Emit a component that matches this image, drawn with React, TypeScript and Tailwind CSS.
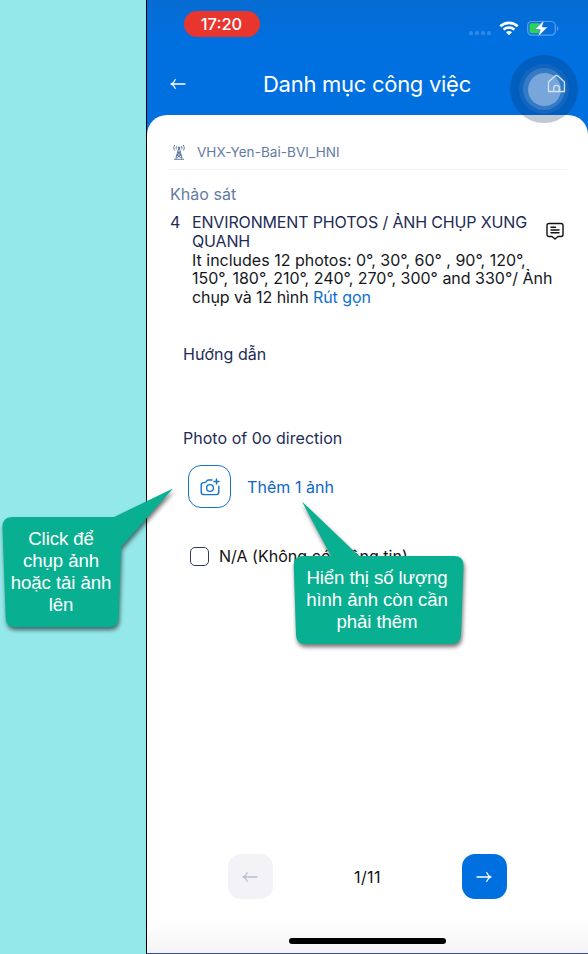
import React from "react";

function ArrowLeft({ className }: { className?: string }) {
  return (
    <svg className={className} width="16" height="12" viewBox="0 0 16 12" fill="none" stroke="currentColor" strokeWidth="1.3" strokeLinecap="round" strokeLinejoin="round">
      <path d="M15 6H1M5.200 1.600C4.400 4 3 5.300 1 6c2 .7 3.400 2 4.200 4.400" />
    </svg>
  );
}

function StatusBar() {
  return (
    <div className="flex h-[49px] items-start pl-[37px] pt-[11px]">
      <div className="flex h-[26px] w-[76px] items-center justify-center rounded-full bg-[#e8352e] pr-px text-[16.500px] font-medium text-white">
        17:20
      </div>
      <div className="ml-[209px] mt-[20px] flex gap-[2px]">
        {[0, 1, 2, 3].map((i) => (
          <span key={i} className="size-1 rounded-[1.500px] bg-[#3186e6]" />
        ))}
      </div>
      <svg className="ml-2 mt-[10px]" width="20" height="15" viewBox="0 0 20 15" fill="none" stroke="#fff" strokeWidth="2.600">
        <path d="M1.300 5.300C6.200.7 13.800.7 18.700 5.300" />
        <path d="M4.600 8.600c3-2.800 7.800-2.800 10.800 0" />
        <path d="M7 11.200c1.700-1.600 4.300-1.600 6 0L10 14.200z" fill="#fff" stroke="none" />
      </svg>
      <svg className="ml-2 mt-[9px]" width="32" height="17" viewBox="0 0 32 17">
        <rect x="0.700" y="1.500" width="27.600" height="13.700" rx="4" fill="none" stroke="#5a9fee" strokeWidth="1.200" />
        <path d="M30 6v5c1-.6 1.300-1.500 1.300-2.500S31 6.600 30 6z" fill="#5a9fee" />
        <rect x="2.500" y="3.300" width="11" height="10" rx="2" fill="#30d158" />
        <path d="M17 .3 7.800 9.600h5.400L11 16.800l9.700-9.700h-5.500z" fill="#fff" stroke="#0070e0" strokeWidth=".5" />
      </svg>
    </div>
  );
}

function AssistiveTouch() {
  return (
    <div className="absolute left-[363px] top-[55px] flex size-[68px] items-center justify-center rounded-full bg-[#002659]/25">
      <div className="flex size-[50px] items-center justify-center rounded-full bg-[#1c68bc]/70">
        <div className="flex size-[42px] items-center justify-center rounded-full bg-[#3b80c9]/80">
          <div className="size-[33px] rounded-full bg-[#78a6da]" />
        </div>
      </div>
    </div>
  );
}

function TowerIcon() {
  return (
    <svg width="12" height="17" viewBox="0 0 12 17" fill="none" stroke="#526b98" strokeWidth=".9">
      <path d="M1.800 1C.4 2.600.4 5 1.800 6.600M10.200 1c1.400 1.600 1.400 4 0 5.600M3.600 2.200c-.7 1-.7 2.300 0 3.200M8.400 2.200c.7 1 .7 2.300 0 3.200" />
      <path d="M5.500 5 2.800 14.500M6.500 5l2.700 9.500M4.700 8h2.600L3.900 11h4.200L3 14.300M4.700 8l3.400 3M3.900 11 9 14.300M1 15.300h10" />
      <circle cx="6" cy="3.800" r=".9" fill="#526b98" />
    </svg>
  );
}

function Callout({ lines, className, children }: { lines: string[]; className: string; children: React.ReactNode }) {
  return (
    <div className={className}>
      {children}
      <div className="relative text-center font-['Liberation_Sans',Arial,sans-serif] text-[18.667px] leading-[22px] tracking-[-0.100px] text-white">
        {lines.map((l) => (
          <div key={l} className="whitespace-nowrap">{l}</div>
        ))}
      </div>
    </div>
  );
}

export default function App() {
  return (
    <div className="relative flex h-[954px] w-[588px] overflow-hidden bg-[#94e8e9] font-[Inter,sans-serif]">
      <div className="w-[146px] shrink-0" />
      <main className="relative flex flex-1 flex-col border-b border-l border-b-[#3a4a9c] border-l-black bg-[#0070e0]">
        <header className="h-[115px] shrink-0 bg-linear-to-b from-[#066bd2] to-[#0070e0] to-35%">
          <StatusBar />
          <div className="flex h-[70px] items-center pl-[23px] text-white">
            <ArrowLeft />
            <h1 className="ml-[77px] whitespace-nowrap text-[22px] tracking-[-0.280px]">Danh mục công việc</h1>
          </div>
        </header>
        <AssistiveTouch />
        <svg className="absolute left-[400px] top-[74px]" width="19" height="20" viewBox="0 0 19 20" fill="none" stroke="#d5e3f4" strokeWidth="1.300" strokeLinejoin="round">
          <path d="M1.500 8.600Q1.500 7.800 2.200 7.200L8.200 2q1.300-1 2.600 0l6 5.200q.7.600.7 1.400v8.900h-16z" />
          <path d="M6.700 17.500v-3.300a2.800 2.800 0 0 1 5.600 0v3.300" />
        </svg>

        <section className="flex flex-1 flex-col rounded-t-[20px] bg-linear-to-b from-white from-96% to-[#f4f4f4]">
          <div className="ml-[23px] mr-[22px] flex h-[55px] items-center border-b border-[#f4f4f6] pl-[3px] pt-[20px] text-[13.500px] tracking-[0.060px] text-[#637aa5]">
            <TowerIcon />
            <span className="ml-3">VHX-Yen-Bai-BVI_HNI</span>
          </div>
          <h2 className="ml-[23px] mt-[14px] h-5 text-[16px] leading-5 tracking-[0.050px] text-[#637aa5]">Khảo sát</h2>
          <div className="mt-[9px] flex h-[95px] pl-[23px] text-[16px] leading-[19px] text-[#1d2c55]">
            <span className="w-[22px]">4</span>
            <div className="w-[366px] whitespace-nowrap">
              <p className="tracking-[-0.150px]">ENVIRONMENT PHOTOS / ẢNH CHỤP XUNG</p>
              <p className="leading-[18.500px] tracking-[-0.150px]">QUANH</p>
              <p className="leading-[18.500px] text-[#16171c]">It includes 12 photos: 0°, 30°, 60° , 90°, 120°,</p>
              <p className="tracking-[-0.010px] text-[#16171c]">150°, 180°, 210°, 240°, 270°, 300° and 330°/ Ảnh</p>
              <p className="tracking-[-0.080px] text-[#16171c]">
                chụp và 12 hình <span className="text-[#0c70cf]">Rút gọn</span>
              </p>
            </div>
            <svg className="-ml-[12px] mt-[9px]" width="18" height="19" viewBox="0 0 18 19" fill="none" stroke="#111" strokeWidth="1.400" strokeLinejoin="round" strokeLinecap="round">
              <path d="M3 1.500h12Q17 1.500 17 3.500v9.300q0 1.700-2 1.700h-3L9 17l-3-2.500H3q-2 0-2-1.700V3.500q0-2 2-2z" />
              <path d="M5 5.300h4.500M5 8h8M5 10.700h8" />
            </svg>
          </div>
          <p className="ml-[36px] mt-[36px] h-5 text-[16px] leading-5 tracking-[0.060px] text-[#1d2c55]">Hướng dẫn</p>
          <p className="ml-[36px] mt-[64px] h-5 text-[16px] leading-5 tracking-[0.030px] text-[#1d2c55]">Photo of 0o direction</p>
          <div className="ml-[41px] mt-[17px] flex items-center">
            <div className="flex size-[43px] items-center justify-center rounded-[13px] border-[1.500px] border-[#1673c9]">
              <svg width="20" height="18" viewBox="0 0 20 18" fill="none" stroke="#1673c9" strokeWidth="1.400" strokeLinecap="round" strokeLinejoin="round">
                <path d="M12 2H8.500Q7 2 6.500 3.300 6 4.600 4.500 4.600H3.500Q1.200 4.600 1.200 7v7q0 2.600 2.500 2.600h12.600q2.500 0 2.500-2.600V8.300" />
                <circle cx="10" cy="10" r="3.400" />
                <path d="M16.500 1v5M14 3.500h5" />
              </svg>
            </div>
            <span className="ml-4 text-[16px] tracking-[0.050px] text-[#0c68c2]">Thêm 1 ảnh</span>
          </div>
          <div className="ml-[43px] mt-[38px] flex h-[20px] items-center">
            <span className="size-[19px] rounded-[5px] border-[1.500px] border-[#303b61]" />
            <span className="ml-[10px] whitespace-nowrap text-[16px] tracking-[0.030px] text-[#111]">N/A (Không có thông tin)</span>
          </div>
          <div className="mt-[288px] flex h-[45px] items-center justify-between pl-[81px] pr-[81px]">
            <div className="flex size-[45px] items-center justify-center rounded-[13px] bg-[#f3f2f6] text-[#b7bfcd]">
              <ArrowLeft className="-ml-px" />
            </div>
            <span className="pt-px text-[16px] tracking-[0.400px] text-[#111]">1/11</span>
            <div className="flex size-[45px] items-center justify-center rounded-[13px] bg-[#0070e0] text-white">
              <ArrowLeft className="rotate-180" />
            </div>
          </div>
          <div className="ml-[142px] mt-[39px] h-[6px] w-[157px] rounded-full bg-black" />
        </section>
      </main>

      <Callout className="absolute left-0 top-[480px] w-[122px] pt-[48px]" lines={["Click để", "chụp ảnh", "hoặc tải ảnh", "lên"]}>
        <svg className="absolute left-0 top-0 drop-shadow-[1px_3px_2px_rgba(0,0,0,0.55)]" width="185" height="160" viewBox="0 0 185 160">
          <path d="M12 37H114L173 8.500 121 67 118.500 138Q118 147 109 147H15Q6 147 5.700 138L2.500 47Q2.500 37 12 37z" fill="#09af91" />
        </svg>
      </Callout>
      <Callout className="absolute left-[293px] top-[500px] w-[168px] pt-[67px]" lines={["Hiển thị số lượng", "hình ảnh còn cần", "phải thêm"]}>
        <svg className="absolute left-0 top-0 drop-shadow-[1px_3px_2px_rgba(0,0,0,0.55)]" width="180" height="155" viewBox="0 0 180 155">
          <path d="M10 56H38L9 1.500 66 56H161Q170.500 56 170.500 65L168 135Q167.500 144 158 144H12Q3.500 144 3 135L.7 65Q.7 56 10 56z" fill="#09af91" />
        </svg>
      </Callout>
    </div>
  );
}
